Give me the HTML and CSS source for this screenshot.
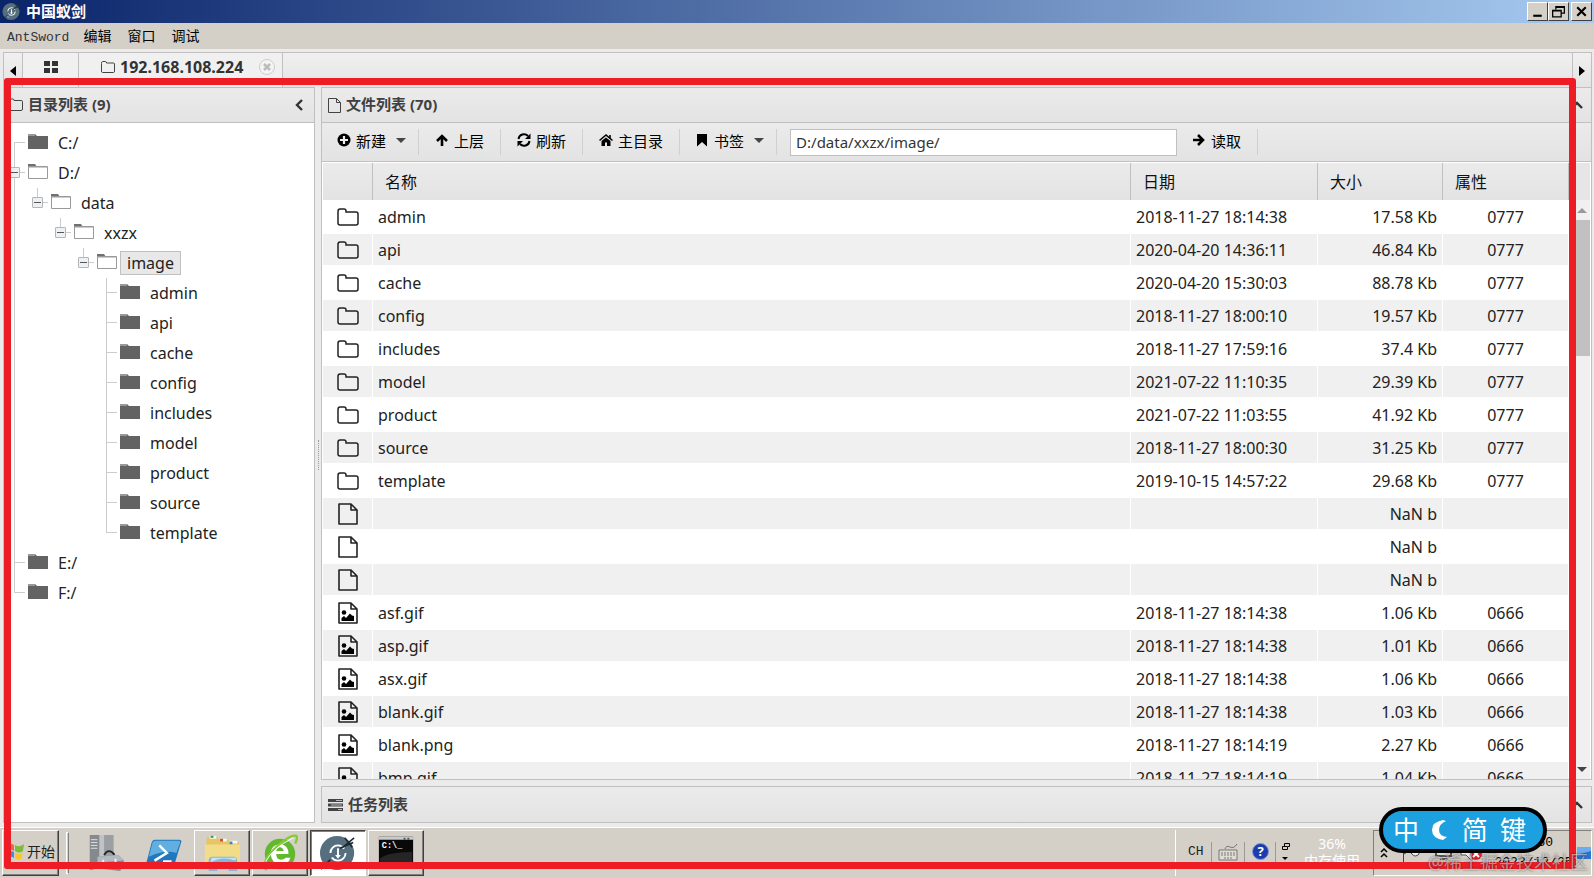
FILE: index.html
```
<!DOCTYPE html>
<html lang="zh-CN">
<head>
    <meta charset="UTF-8">
    <meta name="viewport" content="width=device-width, initial-scale=1.0">
    <title>中国蚁剑</title>
    <link rel="stylesheet" href="styles.css">
</head>
<body>

<!-- Iconos compartidos -->
<svg class="sprite" aria-hidden="true">
    <symbol id="folder" viewBox="0 0 20 18">
        <path d="M0 0h7l2 2h11v13H0z" fill="#636363"/>
        <path d="M0 1h7" stroke="#999" stroke-width="2"/>
    </symbol>
    <symbol id="folder-open" viewBox="0 0 20 18">
        <path d="M0 0h7l2 3H0z" fill="#707070"/>
        <path d="M.5 2.500h19v12H.5z" fill="#fff" stroke="#999"/>
        <path d="M1 3.500h18" stroke="#ccc"/>
    </symbol>
    <symbol id="folder-line" viewBox="0 0 22 18">
        <path d="M1 3.500Q1 1 3 1h4q2 0 2 2v1h10q2 0 2 2v9q0 2-2 2H3q-2 0-2-2z" fill="none" stroke="#222" stroke-width="1.500"/>
    </symbol>
    <symbol id="file" viewBox="0 0 20 22">
        <path d="M1 1h12l6 6v14H1zM13 1v6h6" fill="none" stroke="#222" stroke-width="1.600" stroke-linejoin="round"/>
    </symbol>
    <symbol id="image" viewBox="0 0 20 22">
        <path d="M1 1h12l6 6v14H1zM13 1v6h6" fill="none" stroke="#222" stroke-width="1.600" stroke-linejoin="round"/>
        <circle cx="6" cy="10.500" r="2.300"/>
        <path d="M3.500 19v-3l2.500-2 2 2 4-4.500 2 2 2 .5V19z"/>
    </symbol>
    <symbol id="swords" viewBox="0 0 40 38">
        <circle cx="19" cy="19" r="18" fill="#566f7f"/>
        <circle cx="20" cy="19" r="8" fill="none" stroke="#fff" stroke-width="2" stroke-dasharray="20 5"/>
        <path d="M19 14h2v7h2l-3 4-3-4h2z" fill="#fff"/>
        <path d="M2 36l10-10M25 13L37 3M27 3l8 10M22 14l14-6" stroke="#1c2a30" stroke-width="1.600"/>
        <path d="M11 29l4 3" stroke="#dfe6e8"/>
    </symbol>
</svg>

<header class="titlebar">
    <svg class="logo"><use href="#swords"/></svg>
    <h1>中国蚁剑</h1>
    <div class="window-buttons">
        <button aria-label="最小化"><svg viewBox="0 0 16 14"><path d="M4 11h8" stroke="#000" stroke-width="2"/></svg></button>
        <button aria-label="还原"><svg viewBox="0 0 16 14"><path d="M5.500 5V2.500h8v6H11M5 3h9M2.500 6h8v6h-8zM2 6.500h9" fill="none" stroke="#000" stroke-width="1.200"/></svg></button>
        <button aria-label="关闭" class="close"><svg viewBox="0 0 16 14"><path d="M4 3l8 8M12 3l-8 8" stroke="#000" stroke-width="2"/></svg></button>
    </div>
</header>

<nav class="menubar">
    <button class="latin">AntSword</button>
    <button>编辑</button>
    <button>窗口</button>
    <button>调试</button>
</nav>

<nav class="tabs">
    <button class="tab-arrow" aria-label="向左"><svg viewBox="0 0 6 10"><path d="M6 0v10L0 5z"/></svg></button>
    <button class="tab home" aria-label="主页"><svg viewBox="0 0 14 12"><path d="M0 0h6v5H0zM8 0h6v5H8zM0 7h6v5H0zM8 7h6v5H8z" fill="#333"/></svg></button>
    <div class="tab current">
        <svg class="tab-folder" viewBox="0 0 14 12"><path d="M.5 2.500q0-2 1-2h3q1 0 1 1.500h7q1 0 1 1v7q0 1.500-1 1.500h-11q-1 0-1-1.500z" fill="none" stroke="#444"/></svg>
        <span>192.168.108.224</span>
        <button class="tab-close" aria-label="关闭标签"><svg viewBox="0 0 16 16"><circle cx="8" cy="8" r="7.500" fill="#f4f4f4" stroke="#ccc"/><path d="M5 5l6 6M11 5l-6 6" stroke="#bbb" stroke-width="2.500"/></svg></button>
    </div>
    <button class="tab-arrow right" aria-label="向右"><svg viewBox="0 0 6 10"><path d="M0 0v10l6-5z"/></svg></button>
</nav>

<main class="workspace">
    <!-- Árbol de directorios -->
    <aside class="panel tree-panel">
        <div class="panel-header">
            <svg class="head-icon" viewBox="0 0 15 14"><path d="M.5 2.500q0-1.500 1-1.500h3.500q1 0 1 1.500h7q1.500 0 1.500 1V11q0 1.500-1.500 1.500H2Q.5 12.500.5 11z" fill="none" stroke="#444"/></svg>
            <h2>目录列表 (9)</h2>
            <button class="collapse" aria-label="收起"><svg viewBox="0 0 8 12"><path d="M7 1L2 6l5 5" fill="none" stroke="#333" stroke-width="2.400"/></svg></button>
        </div>
        <ul class="tree">
            <li><div class="node"><svg><use href="#folder"/></svg><span>C:/</span></div></li>
            <li><div class="node"><button class="toggle" aria-label="收起 D"></button><svg><use href="#folder-open"/></svg><span>D:/</span></div>
                <ul>
                    <li><div class="node"><button class="toggle" aria-label="收起 data"></button><svg><use href="#folder-open"/></svg><span>data</span></div>
                        <ul>
                            <li><div class="node"><button class="toggle" aria-label="收起 xxzx"></button><svg><use href="#folder-open"/></svg><span>xxzx</span></div>
                                <ul>
                                    <li><div class="node"><button class="toggle" aria-label="收起 image"></button><svg><use href="#folder-open"/></svg><span class="selected">image</span></div>
                                        <ul>
                                            <li><div class="node"><svg><use href="#folder"/></svg><span>admin</span></div></li>
                                            <li><div class="node"><svg><use href="#folder"/></svg><span>api</span></div></li>
                                            <li><div class="node"><svg><use href="#folder"/></svg><span>cache</span></div></li>
                                            <li><div class="node"><svg><use href="#folder"/></svg><span>config</span></div></li>
                                            <li><div class="node"><svg><use href="#folder"/></svg><span>includes</span></div></li>
                                            <li><div class="node"><svg><use href="#folder"/></svg><span>model</span></div></li>
                                            <li><div class="node"><svg><use href="#folder"/></svg><span>product</span></div></li>
                                            <li><div class="node"><svg><use href="#folder"/></svg><span>source</span></div></li>
                                            <li><div class="node"><svg><use href="#folder"/></svg><span>template</span></div></li>
                                        </ul>
                                    </li>
                                </ul>
                            </li>
                        </ul>
                    </li>
                </ul>
            </li>
            <li><div class="node"><svg><use href="#folder"/></svg><span>E:/</span></div></li>
            <li><div class="node"><svg><use href="#folder"/></svg><span>F:/</span></div></li>
        </ul>
    </aside>

    <div class="splitter"><span></span></div>

    <!-- Lista de archivos -->
    <div class="right-side">
        <section class="panel files-panel">
            <div class="panel-header">
                <svg class="head-icon file-icon" viewBox="0 0 13 15"><path d="M.5.5h8l4 4v10H.5zM8.500.5v4h4" fill="none" stroke="#444"/></svg>
                <h2>文件列表 (70)</h2>
                <button class="collapse" aria-label="收起"><svg class="up" viewBox="0 0 12 8"><path d="M1 7l5-5 5 5" fill="none" stroke="#333" stroke-width="2.400"/></svg></button>
            </div>

            <div class="toolbar">
                <button><svg viewBox="0 0 14 14"><circle cx="7" cy="7" r="6.500"/><path d="M7 3v8M3 7h8" stroke="#eee" stroke-width="2.200"/></svg>新建<i class="caret"></i></button>
                <button><svg viewBox="0 0 14 14"><path d="M7 13V3M2 8l5-5 5 5" fill="none" stroke="#000" stroke-width="2.600"/></svg>上层</button>
                <button><svg viewBox="0 0 14 14"><path d="M1.500 6a5.500 5.500 0 0 1 9.500-3M12.500 8A5.500 5.500 0 0 1 3 11" fill="none" stroke="#000" stroke-width="2"/><path d="M13.500.5V6H8zM.5 13.500V8H6z"/></svg>刷新</button>
                <button><svg viewBox="0 0 14 14"><path d="M2.500 8L7 4.500 11.500 8v5H8V9.500H6V13H2.500z"/><path d="M.5 7.500L7 2l6.500 5.500M11 2v3" fill="none" stroke="#000" stroke-width="1.600"/></svg>主目录</button>
                <button class="has-menu"><svg viewBox="0 0 14 14"><path d="M2 1h10v12.500L7 9l-5 4.500z"/></svg>书签<i class="caret"></i></button>
                <input type="text" class="path" aria-label="路径" value="D:/data/xxzx/image/">
                <button class="read"><svg viewBox="0 0 14 14"><path d="M1 7h10M6 2l5 5-5 5" fill="none" stroke="#000" stroke-width="2.600"/></svg>读取</button>
            </div>

            <div class="grid-area">
                <div class="grid-scroll">
                    <table class="grid">
                        <colgroup><col class="c-icon"><col><col class="c-date"><col class="c-size"><col class="c-attr"></colgroup>
                        <thead>
                            <tr><th></th><th>名称</th><th>日期</th><th>大小</th><th>属性</th></tr>
                        </thead>
                        <tbody>
                            <tr><td><svg class="dir"><use href="#folder-line"/></svg></td><td>admin</td><td>2018-11-27 18:14:38</td><td>17.58 Kb</td><td>0777</td></tr>
                            <tr><td><svg class="dir"><use href="#folder-line"/></svg></td><td>api</td><td>2020-04-20 14:36:11</td><td>46.84 Kb</td><td>0777</td></tr>
                            <tr><td><svg class="dir"><use href="#folder-line"/></svg></td><td>cache</td><td>2020-04-20 15:30:03</td><td>88.78 Kb</td><td>0777</td></tr>
                            <tr><td><svg class="dir"><use href="#folder-line"/></svg></td><td>config</td><td>2018-11-27 18:00:10</td><td>19.57 Kb</td><td>0777</td></tr>
                            <tr><td><svg class="dir"><use href="#folder-line"/></svg></td><td>includes</td><td>2018-11-27 17:59:16</td><td>37.4 Kb</td><td>0777</td></tr>
                            <tr><td><svg class="dir"><use href="#folder-line"/></svg></td><td>model</td><td>2021-07-22 11:10:35</td><td>29.39 Kb</td><td>0777</td></tr>
                            <tr><td><svg class="dir"><use href="#folder-line"/></svg></td><td>product</td><td>2021-07-22 11:03:55</td><td>41.92 Kb</td><td>0777</td></tr>
                            <tr><td><svg class="dir"><use href="#folder-line"/></svg></td><td>source</td><td>2018-11-27 18:00:30</td><td>31.25 Kb</td><td>0777</td></tr>
                            <tr><td><svg class="dir"><use href="#folder-line"/></svg></td><td>template</td><td>2019-10-15 14:57:22</td><td>29.68 Kb</td><td>0777</td></tr>
                            <tr><td><svg><use href="#file"/></svg></td><td></td><td></td><td>NaN b</td><td></td></tr>
                            <tr><td><svg><use href="#file"/></svg></td><td></td><td></td><td>NaN b</td><td></td></tr>
                            <tr><td><svg><use href="#file"/></svg></td><td></td><td></td><td>NaN b</td><td></td></tr>
                            <tr><td><svg><use href="#image"/></svg></td><td>asf.gif</td><td>2018-11-27 18:14:38</td><td>1.06 Kb</td><td>0666</td></tr>
                            <tr><td><svg><use href="#image"/></svg></td><td>asp.gif</td><td>2018-11-27 18:14:38</td><td>1.01 Kb</td><td>0666</td></tr>
                            <tr><td><svg><use href="#image"/></svg></td><td>asx.gif</td><td>2018-11-27 18:14:38</td><td>1.06 Kb</td><td>0666</td></tr>
                            <tr><td><svg><use href="#image"/></svg></td><td>blank.gif</td><td>2018-11-27 18:14:38</td><td>1.03 Kb</td><td>0666</td></tr>
                            <tr><td><svg><use href="#image"/></svg></td><td>blank.png</td><td>2018-11-27 18:14:19</td><td>2.27 Kb</td><td>0666</td></tr>
                            <tr><td><svg><use href="#image"/></svg></td><td>bmp.gif</td><td>2018-11-27 18:14:19</td><td>1.04 Kb</td><td>0666</td></tr>
                        </tbody>
                    </table>
                </div>
                <div class="scrollbar">
                    <div class="scroll-top"></div>
                    <svg class="arrow" viewBox="0 0 10 5"><path d="M0 5l5-5 5 5z" fill="#999"/></svg>
                    <div class="thumb"></div>
                    <svg class="arrow" viewBox="0 0 10 5"><path d="M0 0l5 5 5-5z" fill="#444"/></svg>
                </div>
            </div>
        </section>

        <section class="panel tasks-panel">
            <div class="panel-header">
                <svg class="head-icon" viewBox="0 0 15 14"><path d="M0 1h15v3H0zM0 5.500h15v3H0zM0 10h15v3H0z" fill="#444"/><path d="M8 2.500h6M3 7h11M10 11.500h4" stroke="#bbb"/></svg>
                <h2>任务列表</h2>
                <button class="collapse" aria-label="展开"><svg class="up" viewBox="0 0 12 8"><path d="M1 7l5-5 5 5" fill="none" stroke="#333" stroke-width="2.400"/></svg></button>
            </div>
        </section>
    </div>
</main>

<!-- Barra de tareas -->
<footer class="taskbar">
    <button class="start">
        <svg viewBox="0 0 20 20"><path d="M1 4q4-3 8 0v6q-4-3-8 0z" fill="#ee6b2f"/><path d="M10 4q4 3 9-1l-1 7q-4 3-8 0z" fill="#7dbb3c"/><path d="M1 11q4-2 8 0v6q-4-3-7-1z" fill="#3c8fd6"/><path d="M10 12q4 2 8 0l-2 6q-3 2-6-1z" fill="#f8c62c"/></svg>
        开始
    </button>
    <span class="grip"></span>
    <button class="task plain" aria-label="服务器管理器">
        <svg viewBox="0 0 40 40"><path d="M3 1h25v31l-25 6z" fill="#9b9fa2"/><path d="M3 1h10v35l-10 2z" fill="#84898d"/><path d="M4 6h7M4 9h7M4 12h7M4 15h7" stroke="#e4e6e8"/><path d="M13 1h5v31h-5z" fill="#bfc3c5"/><path d="M18 22q5-8 11 0" fill="none" stroke="#222" stroke-width="2"/><path d="M11 24l22-2 6 6-4 11-24-3z" fill="#7e8a91"/><path d="M11 24l22-2 6 6-28 2z" fill="#b1bac0"/><path d="M17 27v6M30 26v6" stroke="#eee" stroke-width="2"/></svg>
    </button>
    <button class="task plain" aria-label="PowerShell">
        <svg viewBox="0 0 40 40"><path d="M10 6h26q3 0 2 3l-7 23q-1 3-4 3H3q-3 0-2-3l6-23q1-3 3-3z" fill="#2278bd"/><path d="M11 7h25q1 0 1 2l-4 11q-12-4-29 4l4-15q1-2 3-2z" fill="#62aee0"/><path d="M15 12l8 8-13 8M19 29h9" fill="none" stroke="#fff" stroke-width="2.600"/></svg>
    </button>
    <button class="task" aria-label="资源管理器">
        <svg viewBox="0 0 40 40"><path d="M4 3h11l2 3h10l2 3h9l1 27H2z" fill="#e5c566"/><path d="M7 2h7v3H7zM18 5h7v3h-7zM28 7h8v3h-8z" fill="#f8f8f4"/><path d="M8 2h3v2H8z" fill="#369744"/><path d="M18 5h3v3h-3z" fill="#cc4a2c"/><path d="M28 8h3v3h-3z" fill="#3b80c4"/><path d="M2 11h37v24H2z" fill="#f2dc88"/><path d="M6 39V28q0-4 4-4h22q4 0 4 4v11h-9v-7H15v7z" fill="#80b9df"/><path d="M8 30q12-7 26-2l1-3H9z" fill="#c7e4f3"/></svg>
    </button>
    <button class="task" aria-label="浏览器">
        <svg viewBox="0 0 40 40"><circle cx="20" cy="21" r="16" fill="#62b82e"/><path d="M10 20q1-9 10-9t9 10H16q0 6 5 6 3 0 5-2h5q-2 7-10 7-10 0-11-12zm6-2h8q-1-4-4-4t-4 4z" fill="#fff"/><path d="M6 38Q-1 32 13 17 30 0 37 2q2 2-1 8" fill="none" stroke="#83cc35" stroke-width="2.500"/><path d="M5 29Q12 15 34 4" fill="none" stroke="#fff"/></svg>
    </button>
    <button class="task pressed" aria-label="AntSword">
        <svg viewBox="0 0 40 38"><use href="#swords"/></svg>
    </button>
    <button class="task" aria-label="命令提示符">
        <svg viewBox="0 0 40 40"><path d="M2 3h36v32H2z" fill="#090909"/><path d="M2 3h36v3H2z" fill="#c6cbd0"/><path d="M28 5h2M32 5h2" stroke="#555" stroke-width="2"/><path d="M3 26q8-7 34-7v15H3z" fill="#252525"/><text x="5" y="15" font-size="9" font-weight="bold" fill="#fff" font-family="Liberation Mono, monospace">C:\_</text></svg>
    </button>

    <div class="tray">
        <span class="language">CH</span>
        <svg class="keyboard" viewBox="0 0 20 18"><path d="M1 7h18v10H1z" fill="#e0ddd5" stroke="#777"/><path d="M3 10h14M3 12h14M6 15h8" stroke="#777" stroke-dasharray="2 1"/><path d="M7 6q1-4 5-2t7-3" fill="none" stroke="#777"/></svg>
        <button class="help" aria-label="帮助">?</button>
        <svg class="restore" viewBox="0 0 10 20"><path d="M3.500 4V1.500h5v3H7M1.500 4.500h5v3h-5z" fill="none" stroke="#000"/><path d="M1 15h6l-3 3z"/></svg>
        <div class="memory"><span>36%</span><span>内存使用</span></div>
        <div class="notify">
            <svg class="chevrons" viewBox="0 0 8 10"><path d="M1 4l3-3 3 3M1 9l3-3 3 3" fill="none" stroke="#000" stroke-width="1.500"/></svg>
            <svg class="tray-icons" viewBox="0 0 90 24"><path d="M3.500 1v21M4 5q5-4 8 0t7 0v8q-4 4-7 0t-8 0" fill="#eee" stroke="#444"/><path d="M36 4h15v11H36zM40 18h8" fill="#ddd" stroke="#555" stroke-width="2"/><path d="M61 8h5l6-6v18l-6-6h-5z" fill="#eee" stroke="#555"/><circle cx="76" cy="13" r="6" fill="#d8242c"/><path d="M73 10l6 6M79 10l-6 6" stroke="#fff" stroke-width="2"/></svg>
            <div class="clock"><span>16:50</span><span>2023/12/25</span></div>
            <svg class="desktop" viewBox="0 0 14 14"><path d="M0 1h14v12H0z" fill="#2d72cf"/><path d="M0 1h14v4L0 9z" fill="#6cabed"/></svg>
        </div>
    </div>
</footer>

<div class="frame"></div>

<div class="ime">
    <span>中</span>
    <svg viewBox="0 0 18 22"><path d="M12 1Q1 3 1 11t11 10l4-3Q8 17 8 11t7-9z" fill="#fff"/></svg>
    <span>简</span>
    <span>键</span>
</div>
<div class="watermark">@稀土掘金技术社区</div>

</body>
</html>
```
FILE: styles.css
```
* {
    box-sizing: border-box;
}

body {
    font-family: "Noto Sans", "Noto Sans CJK SC", sans-serif;
    font-size: 16px;
    color: #222;
    margin: 0;
    height: 100vh;
    display: flex;
    flex-direction: column;
    background-color: #ebebeb;
    position: relative;
    overflow: hidden;
}

button {
    font-family: inherit;
    color: inherit;
    border: 0;
    padding: 0;
    margin: 0;
    background: none;
}

svg {
    display: block;
    flex: none;
}

.sprite {
    position: absolute;
    width: 0;
    height: 0;
}

/* Barra de título */
.titlebar {
    height: 23px;
    flex: none;
    display: flex;
    align-items: center;
    padding: 0 2px;
    background: linear-gradient(to right, #0a246a, #a6caf0);
    color: white;
}

.logo {
    width: 19px;
    height: 19px;
}

.titlebar h1 {
    font-size: 15px;
    line-height: 20px;
    margin: 0 auto 0 5px;
    padding-bottom: 2px;
}

.window-buttons {
    display: flex;
}

.window-buttons button {
    width: 21px;
    height: 19px;
    padding: 1px;
    background-color: #d4d0c8;
    border: 1px solid #404040;
    border-top-color: white;
    border-left-color: white;
}

.window-buttons svg {
    width: 17px;
    height: 15px;
}

.window-buttons .close {
    margin-left: 2px;
}

.menubar {
    height: 26px;
    flex: none;
    display: flex;
    align-items: center;
    gap: 16px;
    padding: 0 7px;
    background-color: #d4d0c8;
}

.menubar button {
    font-size: 14px;
    line-height: 20px;
    color: black;
}

.menubar .latin {
    font-family: "Liberation Mono", monospace;
    font-size: 13px;
    padding-top: 3px;
    color: #333;
    margin-right: -2px;
}

/* Pestañas */
.tabs {
    height: 35px;
    flex: none;
    display: flex;
    margin: 3px 2px 0 3px;
    border: 1px solid #c0c0c0;
    border-bottom: 0;
    background: linear-gradient(#f0f0f0, #e4e4e4);
}

.tab-arrow {
    width: 19px;
    padding: 2px 0 0 6px;
    border-right: 1px solid #c0c0c0;
}

.tab-arrow.right {
    margin-left: auto;
    border-right: 0;
    border-left: 1px solid #c0c0c0;
}

.tab-arrow svg {
    width: 6px;
    height: 10px;
}

.tab {
    display: flex;
    align-items: center;
    justify-content: center;
    padding-bottom: 6px;
    border-right: 1px solid #c0c0c0;
    background-color: #f0f0f0;
}

.tab.home {
    width: 56px;
}

.home svg {
    width: 14px;
    height: 12px;
}

.tab.current {
    padding-left: 22px;
    padding-right: 7px;
    font-weight: bold;
    color: #333;
}

.tab-folder {
    width: 14px;
    height: 12px;
    margin-right: 5px;
}

.tab-close {
    margin-left: 16px;
}

.tab-close svg {
    width: 16px;
    height: 16px;
}

/* Zona principal */
.workspace {
    flex: 1;
    min-height: 0;
    display: flex;
    padding: 0 2px 4px 3px;
}

.panel {
    border: 1px solid #c0c0c0;
    background-color: white;
}

.panel-header {
    height: 35px;
    display: flex;
    align-items: center;
    padding: 0 11px 0 6px;
    background: linear-gradient(#ebebeb, #e3e3e3);
    border-bottom: 1px solid #c0c0c0;
}

.head-icon {
    width: 15px;
    height: 14px;
}

.head-icon.file-icon {
    width: 13px;
    height: 15px;
}

.panel-header h2 {
    font-size: 15px;
    line-height: 20px;
    color: #404040;
    margin: 0 auto 0 5px;
    padding-bottom: 2px;
}

.collapse svg {
    width: 8px;
    height: 12px;
}

.collapse .up {
    width: 12px;
    height: 8px;
}

.right-side .panel-header {
    padding-right: 8px;
}

.tree-panel {
    width: 312px;
    flex: none;
}

.tree-panel .panel-header {
    padding-left: 4px;
}

.splitter {
    width: 6px;
    flex: none;
    display: flex;
    align-items: center;
    justify-content: center;
}

.splitter span {
    height: 30px;
    border-left: 1px dotted #999;
}

.right-side {
    flex: 1;
    min-width: 0;
    display: flex;
    flex-direction: column;
    gap: 6px;
}

/* Árbol */
.tree,
.tree ul {
    list-style: none;
    margin: 0;
    padding: 0;
}

.tree {
    padding: 5px 0 0 2px;
}

.tree ul {
    padding-left: 23px;
}

.tree li {
    position: relative;
}

.tree li::before {
    content: "";
    position: absolute;
    left: 8px;
    top: 0;
    bottom: 0;
    border-left: 1px solid #ccc;
}

.tree > li:first-child::before {
    top: 14px;
}

.tree li:last-child::before {
    bottom: auto;
    height: 14px;
}

.node {
    position: relative;
    height: 30px;
    display: flex;
    align-items: center;
    padding-left: 22px;
}

.node::before {
    content: "";
    position: absolute;
    left: 8px;
    top: 14px;
    width: 11px;
    border-top: 1px solid #ccc;
}

.toggle {
    position: absolute;
    left: 3px;
    top: 9px;
    width: 11px;
    height: 11px;
    border: 1px solid #b5b5b5;
    border-radius: 1px;
    background: linear-gradient(#555, #555) center / 7px 1px no-repeat #edf1f4;
}

.node svg {
    width: 20px;
    height: 18px;
}

.node span {
    font-size: 16px;
    line-height: 22px;
    padding: 0 6px;
    margin-left: 3px;
    border: 1px solid transparent;
}

.node .selected {
    background-color: #e8e8e8;
    border-color: #c0c0c0;
}

/* Barra de herramientas */
.files-panel {
    flex: 1;
    min-height: 0;
    display: flex;
    flex-direction: column;
}

.files-panel .panel-header,
.tasks-panel .panel-header {
    flex: none;
}

.tasks-panel .panel-header {
    border-bottom: 0;
}

.toolbar {
    height: 39px;
    flex: none;
    display: flex;
    align-items: center;
    background: linear-gradient(#ebebeb, #e3e3e3);
    border-bottom: 1px solid #c0c0c0;
}

.toolbar button {
    height: 26px;
    display: flex;
    align-items: center;
    gap: 5px;
    padding: 0 16px 4px 16px;
    border-right: 1px solid #d0d0d0;
    font-size: 15px;
    color: black;
}

.toolbar button:first-child {
    padding-left: 15px;
    padding-right: 12px;
}

.toolbar .has-menu {
    padding-right: 12px;
}

.toolbar .has-menu,
.toolbar .read {
    padding-left: 15px;
}

.toolbar svg {
    width: 14px;
    height: 14px;
}

.caret {
    margin-left: 5px;
    border: 5px solid transparent;
    border-top-color: #444;
    border-bottom: 0;
}

.path {
    width: 387px;
    height: 27px;
    margin-left: 13px;
    padding: 0 5px;
    border: 1px solid #c0c0c0;
    font-family: inherit;
    font-size: 15px;
    color: #333;
}

/* Tabla de archivos */
.grid-area {
    flex: 1;
    min-height: 0;
    display: flex;
    padding: 1px 1px 0 1px;
}

.grid-scroll {
    flex: 1;
    overflow: hidden;
}

.grid {
    width: 100%;
    table-layout: fixed;
    border-collapse: separate;
    border-spacing: 0;
}

.c-icon {
    width: 50px;
}

.c-date {
    width: 187px;
}

.c-size {
    width: 125px;
}

.c-attr {
    width: 126px;
}

.grid th {
    height: 37px;
    padding: 0 12px 2px 12px;
    text-align: left;
    font-weight: normal;
    color: #111;
    background: linear-gradient(#ebebeb, #e3e3e3);
    border-right: 1px solid #c0c0c0;
}

.grid td {
    height: 33px;
    padding: 0 5px;
    line-height: 22px;
    border: 1px solid white;
    border-left: 0;
}

.grid tr:nth-child(even) td {
    background-color: #f0f0f0;
}

.grid td svg {
    width: 20px;
    height: 22px;
    margin: 0 auto;
}

.grid td .dir {
    width: 22px;
    height: 18px;
}

.grid td:nth-child(4) {
    text-align: right;
}

.grid td:nth-child(5) {
    text-align: center;
}

.scrollbar {
    width: 21px;
    flex: none;
    display: flex;
    flex-direction: column;
    align-items: flex-end;
    background-color: #f0f0f0;
}

.scroll-top {
    width: 100%;
    height: 37px;
    background-color: #e6e6e6;
}

.arrow {
    width: 10px;
    height: 5px;
    margin: 8px 3px 7px 3px;
}

.thumb {
    width: 14px;
    height: 136px;
    margin-bottom: auto;
    background-color: #c1c1c1;
}

/* Barra de tareas */
.taskbar {
    height: 51px;
    flex: none;
    display: flex;
    align-items: stretch;
    padding: 2px;
    border-top: 1px solid white;
    background-color: #d4d0c8;
}

.start,
.task {
    border: 1px solid #404040;
    border-top-color: white;
    border-left-color: white;
    box-shadow: inset -1px -1px #808080;
}

.start {
    width: 57px;
    display: flex;
    align-items: center;
    gap: 2px;
    padding: 0 0 4px 2px;
    font-size: 14px;
    white-space: nowrap;
}

.start svg {
    width: 20px;
    height: 20px;
}

.grip {
    width: 3px;
    margin: 2px 9px 2px 7px;
    border: 1px solid white;
    border-right-color: #808080;
}

.task {
    width: 56px;
    margin-right: 2px;
    display: flex;
    align-items: center;
    justify-content: center;
}

.task svg {
    width: 38px;
    height: 38px;
}

.task.plain {
    border-color: transparent;
    box-shadow: none;
}

.task.pressed {
    background-color: white;
    border-color: #404040 white white #404040;
    box-shadow: inset 1px 1px #808080;
}

.tray {
    margin-left: auto;
    display: flex;
    align-items: center;
    padding-left: 12px;
    border-left: 1px solid white;
}

.language,
.keyboard,
.help,
.restore,
.memory {
    margin-bottom: 3px;
}

.language {
    width: 23px;
    font-family: "Liberation Mono", monospace;
    font-size: 13px;
}

.keyboard {
    width: 34px;
    height: 20px;
    padding: 0 6px;
    border: solid #999;
    border-width: 0 1px;
}

.help {
    width: 17px;
    height: 17px;
    margin-left: 7px;
    margin-right: 6px;
    border-radius: 50%;
    background-color: #1c3cae;
    border: 1px solid #8297d8;
    color: white;
    font-size: 13px;
    font-weight: bold;
    line-height: 15px;
}

.restore {
    width: 16px;
    height: 20px;
    padding-left: 5px;
    border-left: 1px solid #999;
}

.memory {
    width: 82px;
    display: flex;
    flex-direction: column;
    align-items: center;
    color: white;
    font-size: 14px;
    line-height: 17px;
}

.notify {
    width: 219px;
    align-self: stretch;
    display: flex;
    align-items: center;
    padding-left: 6px;
    border: 1px solid #808080;
    border-right-color: white;
    border-bottom-color: white;
}

.chevrons {
    width: 8px;
    height: 10px;
}

.tray-icons {
    width: 90px;
    height: 24px;
    margin-left: 12px;
}

.clock {
    flex: 1;
    display: flex;
    flex-direction: column;
    align-items: center;
    font-family: "Liberation Mono", monospace;
    font-size: 13px;
    line-height: 20px;
    color: black;
}

.desktop {
    width: 14px;
    height: 14px;
}

/* Elementos flotantes */
.frame {
    position: absolute;
    top: 78px;
    left: 4px;
    right: 18px;
    bottom: 9px;
    border: 7px solid #ee1c25;
    border-radius: 3px;
    pointer-events: none;
}

.ime {
    position: absolute;
    right: 47px;
    bottom: 25px;
    width: 168px;
    height: 46px;
    display: flex;
    align-items: center;
    justify-content: space-between;
    padding: 0 17px 0 10px;
    border: 4px solid black;
    border-radius: 23px;
    background-color: #1ca0e0;
    color: white;
    font-size: 26px;
    line-height: 36px;
}

.ime svg {
    width: 18px;
    height: 22px;
}

.watermark {
    position: absolute;
    right: 6px;
    bottom: 4px;
    font-size: 18px;
    line-height: 24px;
    color: rgba(255, 255, 255, 0.5);
    text-shadow: 0 0 2px rgba(0, 0, 0, 0.6);
}
```
